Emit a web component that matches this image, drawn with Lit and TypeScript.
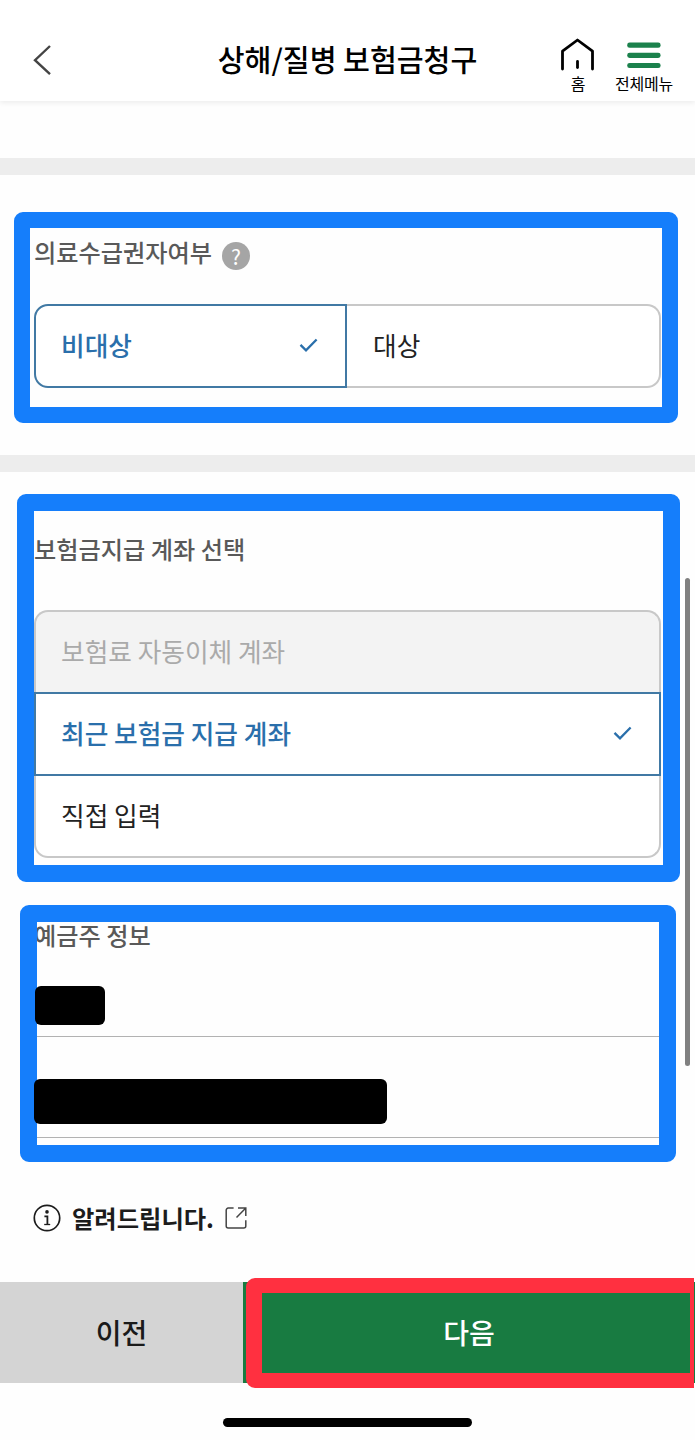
import { LitElement, html, css, svg } from "lit";
import { customElement, property, state } from "lit/decorators.js";
import { classMap } from "lit/directives/class-map.js";

const checkIcon = html`<svg class="check" width="20" height="16" viewBox="0 0 20 16" fill="none">
  <path d="M1.5 7.9 7 13.3 17.6 2.5" stroke="currentColor" stroke-width="2.3" />
</svg>`;

interface Option {
  label: string;
  disabled?: boolean;
}

@customElement("option-group")
export class OptionGroup extends LitElement {
  @property({ attribute: false }) options: Option[] = [];
  @property({ type: Number }) selected = 0;
  @property({ type: Boolean, reflect: true }) vertical = false;

  static styles = css`
    :host {
      display: grid;
      grid-template-columns: 313px 1fr;
      height: 84px;
    }
    :host([vertical]) {
      grid-template-columns: 1fr;
      grid-template-rows: 82px 84px 82px;
      height: 248px;
    }
    .option {
      box-sizing: border-box;
      display: flex;
      align-items: center;
      justify-content: space-between;
      padding: 0 26px 2px 25px;
      border: 2px solid #c8c8c8;
      background: #fff;
      color: #222;
      font-size: 25.7px;
      line-height: 38px;
      white-space: nowrap;
    }
    .option:first-child {
      border-radius: 14px 0 0 14px;
    }
    .option:last-child {
      border-radius: 0 14px 14px 0;
    }
    .option:not(:first-child):not(.selected) {
      border-left-width: 0;
      padding-left: 26px;
    }
    :host([vertical]) .option:first-child {
      border-radius: 14px 14px 0 0;
      border-bottom: 0;
    }
    :host([vertical]) .option:last-child {
      border-radius: 0 0 14px 14px;
      border-left-width: 2px;
      border-top: 0;
      padding-left: 25px;
    }
    .option.selected {
      border-color: #4179a4;
      color: #2a6fab;
      font-weight: 500;
    }
    .disabled {
      background: #f3f3f3;
      color: #aaa;
    }
  `;

  render() {
    return this.options.map(
      (o, i) => html`<div
        class=${classMap({ option: true, selected: i === this.selected, disabled: !!o.disabled })}
        @click=${() => !o.disabled && (this.selected = i)}
      >
        <span>${o.label}</span>${i === this.selected ? checkIcon : ""}
      </div>`
    );
  }
}

@customElement("app-root")
export class AppRoot extends LitElement {
  @state() private targets: Option[] = [{ label: "비대상" }, { label: "대상" }];
  @state() private accounts: Option[] = [
    { label: "보험료 자동이체 계좌", disabled: true },
    { label: "최근 보험금 지급 계좌" },
    { label: "직접 입력" },
  ];

  static styles = css`
    :host {
      display: flex;
      flex-direction: column;
      position: relative;
      width: 695px;
      height: 1440px;
      overflow: hidden;
      background: #fefefe;
      color: #222;
      font-family: "Noto Sans CJK KR", "Noto Sans", sans-serif;
    }
    svg {
      display: block;
    }
    .header {
      box-sizing: border-box;
      flex: none;
      display: grid;
      grid-template-columns: 160px 1fr 160px;
      height: 101px;
      padding-top: 37px;
      background: #fff;
      box-shadow: 0 2px 5px rgba(0, 0, 0, 0.07);
    }
    .back {
      padding: 7px 0 0 32px;
    }
    .title {
      text-align: center;
      font-size: 29.2px;
      font-weight: 500;
      line-height: 43px;
      color: #000;
      white-space: nowrap;
    }
    .actions {
      display: flex;
      justify-content: flex-end;
      gap: 20px;
      padding-right: 22px;
      color: #000;
      font-size: 16px;
      letter-spacing: -0.2px;
      line-height: 20px;
      white-space: nowrap;
    }
    .action {
      display: flex;
      flex-direction: column;
      align-items: center;
    }
    .divider {
      flex: none;
      height: 17px;
      background: #ededed;
    }
    .top-gap {
      flex: none;
      height: 57px;
    }
    .section {
      box-sizing: border-box;
      flex: none;
      position: relative;
      padding: 0 34px;
    }
    .qualification {
      height: 280px;
      padding-top: 59px;
    }
    .account {
      height: 427px;
      padding-top: 59px;
    }
    .holder {
      height: 276px;
      padding-top: 18px;
    }
    .label {
      display: flex;
      align-items: center;
      height: 36px;
      gap: 10px;
      font-size: 24.2px;
      line-height: 36px;
      font-weight: 500;
      color: #595959;
      white-space: nowrap;
    }
    .help {
      display: grid;
      place-items: center;
      width: 28px;
      height: 28px;
      margin-top: 7px;
      border-radius: 50%;
      background: #a5a5a5;
      color: #fff;
      font-size: 21px;
      line-height: 28px;
      font-weight: 400;
    }
    .qualification option-group {
      margin-top: 34px;
    }
    .account option-group {
      margin-top: 43px;
    }
    .frame {
      box-sizing: border-box;
      position: absolute;
      border: 16px solid #157efb;
      border-radius: 9px;
      pointer-events: none;
    }
    .frame-qualification {
      left: 14px;
      top: 37px;
      width: 664px;
      height: 211px;
    }
    .frame-account {
      left: 17px;
      top: 22px;
      width: 663px;
      height: 388px;
      border-width: 17px;
    }
    .frame-holder {
      left: 20px;
      top: 6px;
      width: 656px;
      height: 257px;
      border-width: 17px;
    }
    .field {
      box-sizing: border-box;
      display: flex;
      align-items: flex-end;
      height: 84px;
      padding-bottom: 11px;
      border-bottom: 1px solid #b2b2b2;
    }
    .field.number {
      height: 101px;
      padding-bottom: 13px;
    }
    .mask {
      position: relative;
      z-index: 1;
      width: 70px;
      height: 39px;
      margin-left: 1px;
      border-radius: 6px;
      background: #000;
    }
    .number .mask {
      width: 353px;
      height: 45px;
      margin-left: 0;
    }
    .notice {
      flex: none;
      display: flex;
      align-items: center;
      height: 44px;
      padding-left: 33px;
      margin-top: 21px;
      color: #1c1c1c;
    }
    .notice-text {
      margin: 0 11px 0 11px;
      font-size: 24.3px;
      font-weight: 700;
      line-height: 36px;
      white-space: nowrap;
    }
    .buttons {
      position: relative;
      flex: none;
      display: grid;
      grid-template-columns: 243px 1fr;
      height: 101px;
      margin-top: auto;
      font-size: 28px;
      font-weight: 500;
      line-height: 101px;
      text-align: center;
    }
    .prev {
      background: #d4d4d4;
      color: #1a1a1a;
    }
    .next {
      background: #187b41;
      color: #fff;
    }
    .frame-next {
      left: 246px;
      top: -4px;
      width: 448px;
      height: 110px;
      border-color: #ff3040;
      border-style: solid;
      border-width: 15px 4px 15px 16px;
      border-radius: 9px 0 0 9px;
    }
    .home-area {
      flex: none;
      display: flex;
      justify-content: center;
      height: 22px;
      padding-top: 35px;
    }
    .home-bar {
      width: 249px;
      height: 9px;
      border-radius: 5px;
      background: #000;
    }
    .scrollbar {
      position: absolute;
      left: 685px;
      top: 578px;
      width: 5px;
      height: 488px;
      border-radius: 3px;
      background: #808080;
    }
  `;

  render() {
    return html`
      <div class="header">
        <div class="back">
          <svg width="20" height="32" viewBox="0 0 20 32" fill="none">
            <path d="M18 2 3 16.2 18 30.2" stroke="#444" stroke-width="2.4" />
          </svg>
        </div>
        <div class="title">상해/질병 보험금청구</div>
        <div class="actions">
          <div class="action">
            <svg width="34" height="36" viewBox="0 0 34 36" fill="none" stroke="#000" stroke-width="2.8" stroke-linecap="round">
              <path d="M1.5 32V14.2L16.5 3l15 11.2V32" stroke-linejoin="round" />
              <path d="M16.5 24.5v6" />
            </svg>
            <span>홈</span>
          </div>
          <div class="action">
            <svg width="34" height="36" viewBox="0 0 34 36" fill="#1b814c">
              ${[5.6, 15.8, 25.9].map((y) => svg`<rect x="0.2" y=${y} width="33.4" height="5.2" rx="2.4" />`)}
            </svg>
            <span>전체메뉴</span>
          </div>
        </div>
      </div>
      <div class="top-gap"></div>
      <div class="divider"></div>
      <div class="section qualification">
        <div class="label"><span>의료수급권자여부</span><span class="help">?</span></div>
        <option-group .options=${this.targets} .selected=${0}></option-group>
        <div class="frame frame-qualification"></div>
      </div>
      <div class="divider"></div>
      <div class="section account">
        <div class="label">보험금지급 계좌 선택</div>
        <option-group vertical .options=${this.accounts} .selected=${1}></option-group>
        <div class="frame frame-account"></div>
      </div>
      <div class="section holder">
        <div class="label">예금주 정보</div>
        <div class="field"><div class="mask"></div></div>
        <div class="field number"><div class="mask"></div></div>
        <div class="frame frame-holder"></div>
      </div>
      <div class="notice">
        <svg width="28" height="28" viewBox="0 0 28 28" fill="none" stroke="#1c1c1c">
          <circle cx="14" cy="14" r="12.7" stroke-width="1.7" />
          <circle cx="14" cy="7.9" r="1.8" fill="#1c1c1c" stroke="none" />
          <path d="M11.4 12.3H14.4V20.4" stroke-width="1.8" />
          <path d="M11.2 20.5h6" stroke-width="1.3" />
        </svg>
        <span class="notice-text">알려드립니다.</span>
        <svg width="22" height="22" viewBox="0 0 22 22" fill="none" stroke="#444" stroke-width="1.5">
          <path d="M8.600 1.100H3.200a2 2 0 0 0-2 2v15.800a2 2 0 0 0 2 2h15.600a2 2 0 0 0 2-2V13.200" />
          <path d="M13 1.100h7.800V9M20.600 1.300 11.500 10.500" />
        </svg>
      </div>
      <div class="buttons">
        <div class="prev">이전</div>
        <div class="next">다음</div>
        <div class="frame frame-next"></div>
      </div>
      <div class="home-area"><div class="home-bar"></div></div>
      <div class="scrollbar"></div>
    `;
  }
}
